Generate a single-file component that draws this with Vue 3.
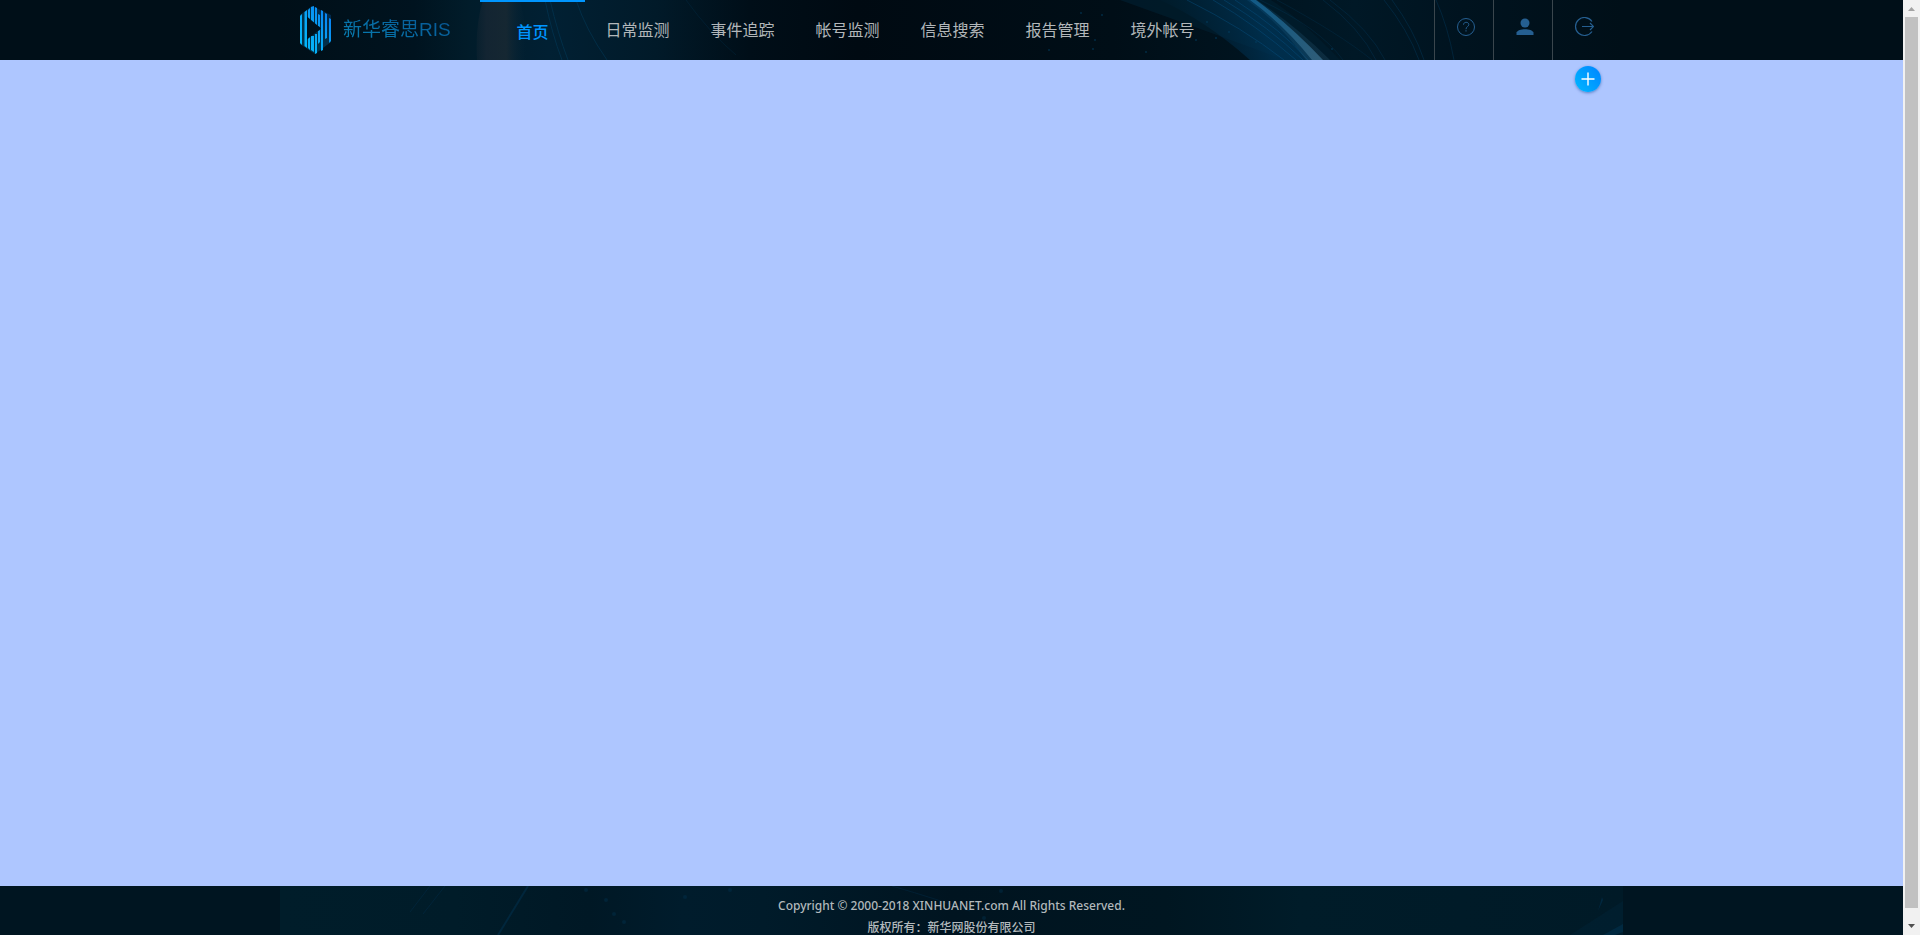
<script setup>
const navItems = ['首页', '日常监测', '事件追踪', '帐号监测', '信息搜索', '报告管理', '境外帐号']
const dots = [
  [801, 13], [822, 15], [815, 40], [769, 50], [813, 49], [866, 52], [927, 22], [949, 32], [936, 38], [916, 40], [976, 42], [1052, 49],
]
const footerDots = [[306, 4], [326, 14], [334, 28], [344, 36], [405, 11], [450, 4], [721, 5], [704, 32]]
</script>

<template>
  <div class="window">
    <div class="page">
      <header class="header">
        <div class="header-inner">
          <svg class="art" viewBox="0 0 1343 60" preserveAspectRatio="none" aria-hidden="true">
            <defs>
              <linearGradient id="sky">
                <stop offset="0" stop-color="#000f18" />
                <stop offset=".1" stop-color="#00131f" />
                <stop offset=".14" stop-color="#011c2a" />
                <stop offset=".2" stop-color="#012033" />
                <stop offset=".28" stop-color="#011a29" />
                <stop offset=".35" stop-color="#000e18" />
                <stop offset=".43" stop-color="#000a12" />
                <stop offset=".62" stop-color="#000e17" />
                <stop offset=".8" stop-color="#001826" />
                <stop offset=".88" stop-color="#00131f" />
                <stop offset="1" stop-color="#000f18" />
              </linearGradient>
              <linearGradient id="warm">
                <stop offset="0" stop-color="#192734" stop-opacity=".3" />
                <stop offset=".2" stop-color="#192734" stop-opacity=".75" />
                <stop offset=".6" stop-color="#1c2a33" stop-opacity=".75" />
                <stop offset="1" stop-color="#08263a" stop-opacity="0" />
              </linearGradient>
              <linearGradient id="beam" gradientUnits="userSpaceOnUse" x1="950" y1="0" x2="1040" y2="60">
                <stop offset="0" stop-color="#126599" stop-opacity=".8" />
                <stop offset=".5" stop-color="#1a5a80" />
                <stop offset="1" stop-color="#2f5d78" />
              </linearGradient>
              <linearGradient id="glow" gradientUnits="userSpaceOnUse" x1="900" y1="40" x2="975" y2="10">
                <stop offset="0" stop-color="#002b46" stop-opacity=".1" />
                <stop offset="1" stop-color="#00365a" stop-opacity=".7" />
              </linearGradient>
            </defs>
            <rect width="1343" height="60" fill="url(#sky)" />
            <path d="M197 60Q195 25 203 0H240Q247 25 246 60Z" fill="url(#warm)" />
            <g fill="none" stroke="#034063" opacity=".45">
              <path d="M265 0Q272 34 282 60M270 0Q278 34 288 60M296 0Q306 30 327 60" />
              <path d="M406 0Q430 33 456 55" opacity=".5" />
            </g>
            <path d="M840 0Q940 36 1005 60H1060Q1020 18 991 0Z" fill="#001d2e" opacity=".75" />
            <path d="M880 0Q925 20 970 60H1036Q1005 20 971 0Z" fill="url(#glow)" />
            <g fill="none" stroke="#075080" opacity=".45">
              <path d="M907 0Q963 28 1004 60M933 0Q976 25 1016 60M944 0Q989 27 1023 60M955 0Q1003 31 1028 60" />
              <path d="M980 0Q1040 28 1063 60M997 0Q1060 34 1092 60" opacity=".4" />
              <path d="M1043 0Q1080 28 1096 60M1050 0Q1090 30 1105 60" opacity=".5" />
              <path d="M1104 0Q1128 30 1139 60M1112 0Q1134 30 1144 60M1156 0Q1168 27 1174 60" opacity=".6" />
            </g>
            <path d="M967 0H977Q1017 27 1050 60H1026Q1001 24 967 0Z" fill="url(#beam)" opacity=".25" />
            <path d="M970 0H976Q1010 25 1043 60H1032Q1004 25 970 0Z" fill="url(#beam)" />
            <circle v-for="([x, y], i) in dots" :key="i" :cx="x" :cy="y" r="1" fill="#004062" opacity=".6" />
          </svg>

          <a class="brand" href="#">
            <svg class="brand-mark" viewBox="0 0 32 48" aria-hidden="true">
              <defs>
                <linearGradient id="mark" x1="0" y1="1" x2="1" y2="0">
                  <stop offset="0" stop-color="#00bfff" />
                  <stop offset=".45" stop-color="#08a7f5" />
                  <stop offset="1" stop-color="#0875f4" />
                </linearGradient>
              </defs>
              <mask id="bars" maskUnits="userSpaceOnUse" x="0" y="0" width="32" height="48">
                <path d="M0 9L12 0L31 9V36L15 48L0 38Z" fill="#fff" opacity=".22" />
                <path d="M0 10L2 8V39L0 37ZM4.5 6L7 4V42L4.5 40ZM8 4L10 2V44L8 42ZM11 1L14 0V18H11ZM11 30H14V46L11 44ZM15 1L17 2V19H15ZM15 28H17V47L15 48ZM18 8L20 9V21L18 20ZM18 25L20 24V36L18 38ZM21 4L23 5V44L21 45ZM25 7L27 8V32L25 33ZM29 12L31 13V35L29 37Z" fill="#fff" />
              </mask>
              <rect width="32" height="48" fill="url(#mark)" mask="url(#bars)" />
              <path d="M7 10.500L21 22.500L7 33.500Z" fill="#00111b" />
            </svg>
            <span class="brand-name">新华睿思RIS</span>
          </a>

          <nav class="nav">
            <a v-for="(item, i) in navItems" :key="item" href="#" :class="{ active: i === 0 }">{{ item }}</a>
          </nav>

          <div class="tools">
            <button type="button" aria-label="帮助">
              <svg viewBox="0 0 20 20" fill="none" stroke="currentColor">
                <circle cx="10" cy="10" r="8.5" />
                <path d="M7.500 7.700C7.500 4.500 12.800 4.500 12.800 7.600C12.800 9.600 10 9.600 10 12.200M10 13.200V14.500" />
              </svg>
            </button>
            <button type="button" aria-label="用户">
              <svg viewBox="0 0 20 20" fill="currentColor">
                <circle cx="10" cy="6" r="4.5" />
                <path d="M1.500 18V15.500C3 11 17 11 18.500 15.500V18Z" />
              </svg>
            </button>
            <button type="button" aria-label="退出">
              <svg viewBox="0 0 20 20" fill="none" stroke="currentColor" stroke-width="1.2">
                <path d="M18 4.500A9 9 0 1 0 18 14.500M8 9.500H19.500M16 6L19.500 9.500L16 13" />
              </svg>
            </button>
          </div>
        </div>
      </header>

      <main class="main">
        <div class="main-inner">
          <button class="add" type="button" aria-label="添加">
            <svg viewBox="0 0 26 26" fill="none" stroke="#fff" stroke-width="1.4">
              <path d="M13 6.500V19.500M6.500 13H19.500" />
            </svg>
          </button>
        </div>
      </main>

      <footer class="footer">
        <div class="footer-inner">
          <svg class="art" viewBox="0 0 1343 49" preserveAspectRatio="none" aria-hidden="true">
            <defs>
              <linearGradient id="sea">
                <stop offset="0" stop-color="#001d2a" />
                <stop offset=".13" stop-color="#001c29" />
                <stop offset=".23" stop-color="#001825" />
                <stop offset=".3" stop-color="#001c2c" />
                <stop offset=".36" stop-color="#001b2a" />
                <stop offset=".5" stop-color="#001420" />
                <stop offset=".66" stop-color="#001621" />
                <stop offset=".76" stop-color="#001c29" />
                <stop offset="1" stop-color="#001a27" />
              </linearGradient>
            </defs>
            <rect width="1343" height="49" fill="url(#sea)" />
            <g fill="none" stroke="#00395c">
              <path d="M248 0L218 49" stroke-width="2" opacity=".4" />
              <path d="M150 0L130 26M165 0L143 28M612 0Q660 14 690 25" opacity=".3" />
            </g>
            <path d="M1323 49L1343 38V46L1335 49ZM1318 25L1322 11L1323 14Z" fill="#003557" opacity=".5" />
            <path d="M1290 49L1343 15V49Z" fill="#002b45" opacity=".25" />
            <circle v-for="([x, y], i) in footerDots" :key="i" :cx="x" :cy="y" r="2" fill="#003553" opacity=".4" />
          </svg>
          <p>Copyright © 2000-2018 XINHUANET.com All Rights Reserved.</p>
          <p>版权所有：新华网股份有限公司</p>
        </div>
      </footer>
    </div>

    <div class="scrollbar" aria-hidden="true">
      <svg viewBox="0 0 17 17" fill="#a3a3a3"><path d="M5 11L8.500 7L12 11Z" /></svg>
      <div class="thumb"></div>
      <svg viewBox="0 0 17 17" fill="#505050"><path d="M5 6L8.500 10L12 6Z" /></svg>
    </div>
  </div>
</template>

<style>
body {
  margin: 0;
  overflow: hidden;
}
</style>

<style scoped>
.window {
  display: flex;
  height: 100vh;
  overflow: hidden;
  font-family: "Noto Sans", "Noto Sans CJK SC", sans-serif;
}
.page {
  flex: 1;
  min-width: 0;
  display: flex;
  flex-direction: column;
}
.header {
  background: #000f18;
}
.header-inner,
.footer-inner {
  position: relative;
  max-width: 1343px;
  margin: 0 auto;
}
.header-inner {
  display: flex;
  height: 60px;
}
.art {
  position: absolute;
  inset: 0;
  width: 100%;
  height: 100%;
}
.brand,
.nav,
.tools,
.footer p {
  position: relative;
}
.brand {
  display: flex;
  align-items: center;
  gap: 11px;
  box-sizing: border-box;
  width: 200px;
  padding-left: 20px;
  text-decoration: none;
}
.brand-mark {
  width: 32px;
  height: 48px;
}
.brand-name {
  font-family: "Liberation Sans", "Noto Sans CJK SC", sans-serif;
  font-size: 19px;
  line-height: 28px;
  white-space: nowrap;
  color: transparent;
  background: linear-gradient(20deg, #0784b8, #075391);
  background-clip: text;
}
.nav {
  display: flex;
}
.nav a {
  box-sizing: border-box;
  width: 105px;
  line-height: 58px;
  font-family: "Noto Sans CJK SC", sans-serif;
  font-size: 16px;
  text-align: center;
  text-decoration: none;
  color: #b2b7ba;
}
.nav a.active {
  border-top: 2px solid #0096ff;
  font-weight: 500;
  color: #0096ff;
}
.tools {
  display: flex;
  margin-left: auto;
  margin-right: 12px;
}
.tools button {
  box-sizing: border-box;
  width: 59px;
  padding: 0 0 6px 4px;
  border: 0;
  border-left: 1px solid #3a464d;
  background: none;
  color: #255f91;
}
.tools svg {
  display: block;
  width: 20px;
  height: 20px;
  margin: 0 auto;
}
.main {
  flex: 1;
  background: #aec6ff;
}
.main-inner {
  display: flex;
  justify-content: flex-end;
  max-width: 1343px;
  margin: 0 auto;
}
.add {
  width: 26px;
  height: 26px;
  margin: 6px 22px 0 0;
  padding: 0;
  border: 0;
  border-radius: 50%;
  background: linear-gradient(50deg, #00b8ff, #0084ff);
  box-shadow: 0 1px 3px rgba(0, 60, 140, 0.5);
}
.add svg {
  display: block;
}
.footer {
  background: #001521;
}
.footer-inner {
  box-sizing: border-box;
  height: 49px;
  padding-top: 9px;
}
.footer p {
  margin: 0;
  font-size: 12px;
  font-weight: 500;
  line-height: 22px;
  text-align: center;
  color: #b2b9bc;
}
.scrollbar {
  display: flex;
  flex-direction: column;
  width: 17px;
  background: #f1f1f1;
}
.scrollbar svg {
  width: 17px;
  height: 17px;
}
.thumb {
  flex: 1;
  margin: 0 2px 10px;
  background: #c1c1c1;
}
</style>
